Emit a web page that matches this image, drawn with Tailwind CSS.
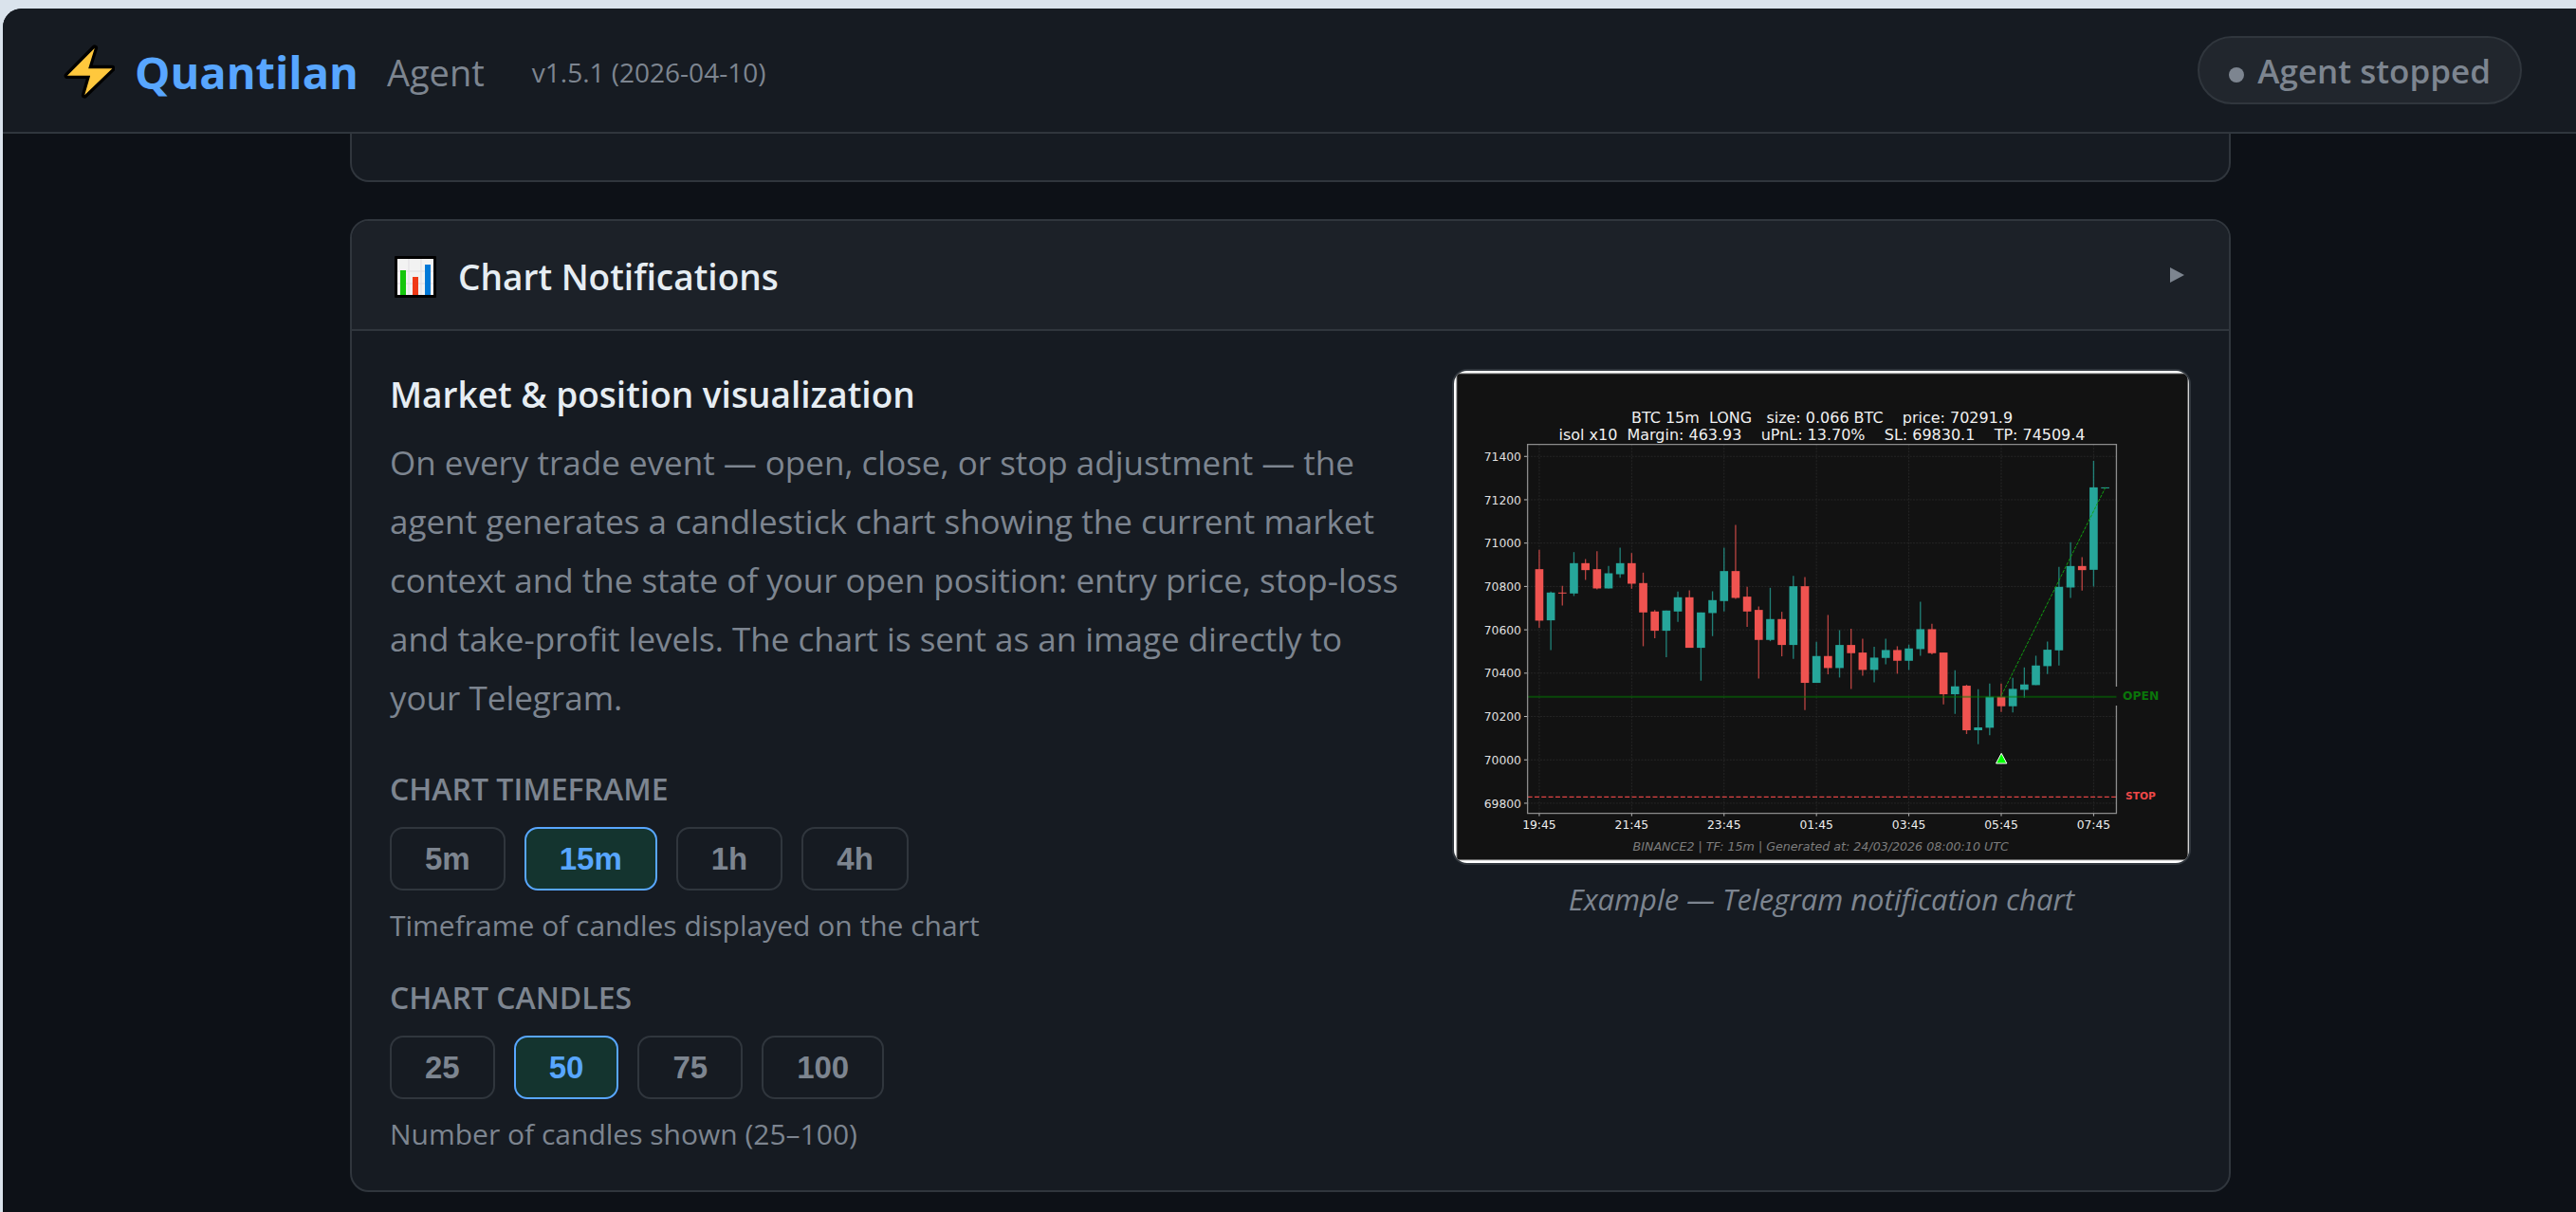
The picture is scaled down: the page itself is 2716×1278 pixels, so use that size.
<!DOCTYPE html>
<html lang="en" class="bg-[#dae3ec]">
<head>
    <meta charset="UTF-8">
    <title>Quantilan Agent</title>
    <!-- Tailwind CSS -->
    <script src="https://cdn.jsdelivr.net/npm/@tailwindcss/browser@4"></script>
</head>
<body class="flex min-h-screen flex-col bg-[#dae3ec] pt-[9px] pl-[3px] font-['Open_Sans',sans-serif] text-[#e6edf3]">

<div class="flex-1 overflow-hidden rounded-tl-[20px] bg-[#0d1117]">

    <header class="flex h-[132px] items-center justify-between border-b-2 border-[#30363d] bg-[#161b22] pr-[57px] pl-[64px]">
        <!-- Logo -->
        <div class="flex items-center pt-1">
            <svg class="mr-[21px] w-[54px]" viewBox="83 84 163 174" aria-hidden="true">
                <path d="M182 95 95 183H168L150 245 238 160H162Z" fill="#ffc83d" stroke="#000" stroke-width="20" stroke-linejoin="round"/>
                <path d="M182 95 95 183H168L150 245 238 160H162Z" fill="#ffc83d"/>
            </svg>
            <span class="mr-[30px] text-[47px] font-bold text-[#58a6ff]">Quantilan</span>
            <span class="mr-[50px] text-[38px] text-[#7d8590]">Agent</span>
            <span class="text-[28px] text-[#7d8590]">v1.5.1 (2026-04-10)</span>
        </div>

        <!-- Agent status -->
        <div class="flex h-[72px] items-center gap-[14px] rounded-full border-2 border-[#30363d] bg-[#21262d] px-[31px] pt-0.5 text-[35px] font-semibold text-[#7d8590]">
            <span class="mt-2 size-4 rounded-full bg-[#7d8590]"></span>
            Agent stopped
        </div>
    </header>

    <main class="mx-auto max-w-[1985px] pl-0.5">
        <section class="mb-[39px] h-[51px] rounded-b-[20px] border-2 border-t-0 border-[#30363d] bg-[#161b22]"></section>

        <!-- Chart notifications card -->
        <section class="overflow-hidden rounded-[20px] border-2 border-[#30363d] bg-[#161b22]">
            <button type="button" class="flex h-[116px] w-full items-center justify-between border-b-2 border-[#30363d] bg-[#1c2128] pr-[47px] pl-[45px] text-left">
                <span class="flex items-center gap-[23px] pt-1 text-[37px] font-semibold">
                    <svg class="size-[44px]" viewBox="0 0 44 44" aria-hidden="true">
                        <rect width="44" height="44" rx="1" fill="#000"/>
                        <rect x="3" y="3" width="38" height="38" fill="#f2f2f2"/>
                        <path d="M15 3V41M28 3V41M3 16H41M3 29H41" stroke="#e0dde2"/>
                        <rect x="6" y="15" width="6" height="26" fill="#16c60c"/>
                        <rect x="19" y="22" width="6" height="19" fill="#f03a17"/>
                        <rect x="32" y="9" width="6" height="32" fill="#0078d7"/>
                    </svg>
                    Chart Notifications
                </span>
                <svg class="h-4 w-[15px]" viewBox="0 0 15 16" aria-hidden="true"><path d="M0 0 15 8 0 16Z" fill="#7d8590"/></svg>
            </button>

            <div class="grid grid-cols-[11fr_8fr] gap-12 px-10 pt-10 pb-[38px]">
                <div>
                    <h2 class="text-[37px] leading-[54px] font-semibold">Market &amp; position visualization</h2>
                    <p class="mt-[14px] mb-10 text-[35px] leading-[62px] text-[#7d8590]">On every trade event — open, close, or stop adjustment — the agent generates a candlestick chart showing the current market context and the state of your open position: entry price, stop-loss and take-profit levels. The chart is sent as an image directly to your Telegram.</p>

                    <div role="group" aria-labelledby="timeframe" class="mb-[30px]">
                        <h3 id="timeframe" class="mb-[15px] text-[32px] leading-[50px] font-semibold text-[#7d8590]">CHART TIMEFRAME</h3>
                        <div class="flex gap-5 font-['Liberation_Sans',sans-serif] text-[33px] leading-[39px] font-bold text-[#7d8590]">
                            <button type="button" class="rounded-[14px] border-2 border-[#30363d] px-[35px] py-3">5m</button>
                            <button type="button" aria-pressed="true" class="rounded-[14px] border-2 border-[#58a6ff] bg-[#14342f] px-[35px] py-3 text-[#58a6ff]">15m</button>
                            <button type="button" class="rounded-[14px] border-2 border-[#30363d] px-[35px] py-3">1h</button>
                            <button type="button" class="rounded-[14px] border-2 border-[#30363d] px-[35px] py-3">4h</button>
                        </div>
                        <p class="mt-4 text-[30px] leading-[42px] text-[#7d8590]">Timeframe of candles displayed on the chart</p>
                    </div>

                    <div role="group" aria-labelledby="candles">
                        <h3 id="candles" class="mb-[15px] text-[32px] leading-[50px] font-semibold text-[#7d8590]">CHART CANDLES</h3>
                        <div class="flex gap-5 font-['Liberation_Sans',sans-serif] text-[33px] leading-[39px] font-bold text-[#7d8590]">
                            <button type="button" class="rounded-[14px] border-2 border-[#30363d] px-[35px] py-3">25</button>
                            <button type="button" aria-pressed="true" class="rounded-[14px] border-2 border-[#58a6ff] bg-[#14342f] px-[35px] py-3 text-[#58a6ff]">50</button>
                            <button type="button" class="rounded-[14px] border-2 border-[#30363d] px-[35px] py-3">75</button>
                            <button type="button" class="rounded-[14px] border-2 border-[#30363d] px-[35px] py-3">100</button>
                        </div>
                        <p class="mt-4 text-[30px] leading-[42px] text-[#7d8590]">Number of candles shown (25–100)</p>
                    </div>
                </div>

                <figure>
                    <div class="overflow-hidden rounded-[16px] border-2 border-[#30363d] bg-white">
                        <svg class="block w-full font-['DejaVu_Sans',sans-serif]" viewBox="36 30 2328 1557" role="img" aria-label="BTC 15m candlestick chart">
                            <rect x="43" y="37" width="2318" height="1543" fill="#8a8a8a"/>
                            <rect x="46" y="40" width="2312" height="1537" fill="#121212"/>
                            <g class="text-[48px]" fill="#f0f0f0" text-anchor="middle">
                                <text x="1201" y="194" class="whitespace-pre">BTC 15m  LONG   size: 0.066 BTC    price: 70291.9</text>
                                <text x="1201" y="249" class="whitespace-pre">isol x10  Margin: 463.93    uPnL: 13.70%    SL: 69830.1    TP: 74509.4</text>
                            </g>
                            <g id="axes"></g>
                            <g id="candlesticks"></g>
                            <!-- Entry, stop and running trade lines -->
                            <path d="M269 1062H2133" stroke="#008000" stroke-width="6" stroke-opacity="0.5"/>
                            <path d="M269 1379H2133" stroke="#e04545" stroke-width="4" stroke-dasharray="15 7"/>
                            <path d="M1769 1058 2098 400" stroke="#10a010" stroke-width="3" stroke-dasharray="10 4"/>
                            <path d="M1769 1241 1786 1273H1752Z" fill="#00ff00" stroke="#fff" stroke-width="3"/>
                            <path d="M2133 1030V263H269V1431H2133V1090" fill="none" stroke="#8c8c8c" stroke-width="4"/>
                            <g class="font-bold">
                                <text x="2153" y="1073" class="text-[37px]" fill="#0a750a">OPEN</text>
                                <text x="2162" y="1388" class="text-[32px]" fill="#ef4848">STOP</text>
                            </g>
                            <text x="1197" y="1548" class="text-[38px] italic" fill="#7d7d7d" text-anchor="middle">BINANCE2 | TF: 15m | Generated at: 24/03/2026 08:00:10 UTC</text>
                        </svg>
                    </div>
                    <figcaption class="mt-[15px] text-center text-[31px] leading-[42px] text-[#7d8590] italic">Example — Telegram notification chart</figcaption>
                </figure>
            </div>
        </section>
    </main>
</div>

<script>
    // Candle positions in chart units: [high, body top, body bottom, low, rising]
    const candles = [
        [597, 658, 821, 844, 0], [729, 732, 820, 914, 1], [711, 732, 735, 773, 0], [604, 639, 735, 743, 1],
        [626, 639, 661, 692, 0], [601, 658, 719, 722, 0], [648, 671, 719, 719, 1], [590, 639, 674, 685, 1],
        [607, 639, 704, 720, 0], [669, 702, 795, 902, 0], [787, 792, 853, 877, 0], [789, 789, 853, 937, 1],
        [729, 747, 792, 825, 1], [725, 747, 907, 907, 0], [795, 795, 907, 1011, 1], [728, 756, 797, 870, 1],
        [590, 664, 759, 792, 1], [518, 664, 749, 752, 0], [714, 745, 792, 841, 0], [776, 787, 882, 1004, 0],
        [717, 816, 882, 886, 1], [793, 816, 898, 934, 0], [679, 712, 898, 942, 1], [683, 712, 1018, 1104, 0],
        [888, 933, 1018, 1018, 1], [803, 933, 971, 991, 0], [851, 898, 971, 1001, 1], [847, 898, 924, 1037, 0],
        [878, 922, 977, 995, 0], [904, 938, 977, 1016, 1], [878, 914, 939, 959, 1], [902, 914, 948, 989, 0],
        [897, 909, 948, 977, 1], [761, 848, 911, 932, 1], [831, 848, 924, 928, 0], [922, 922, 1054, 1086, 0],
        [978, 1029, 1054, 1116, 1], [1024, 1027, 1168, 1180, 0], [1038, 1159, 1168, 1212, 1], [1020, 1062, 1160, 1184, 1],
        [1020, 1062, 1092, 1110, 0], [1002, 1037, 1092, 1112, 1], [969, 1023, 1040, 1065, 1], [932, 963, 1025, 1025, 1],
        [887, 913, 965, 990, 1], [651, 714, 915, 963, 1], [573, 648, 716, 749, 1], [620, 648, 661, 726, 0],
        [315, 399, 660, 713, 1], [399, 399, 402, 402, 1]
    ];
    const times = ['19:45', '21:45', '23:45', '01:45', '03:45', '05:45', '07:45'];
    const candleX = i => 306 + i * 36.56;

    // Grid lines, ticks and axis labels
    let axes = '';
    for (let i = 0; i < 9; i++) {
        const y = 301 + i * 137.25;
        axes += `<path d="M269 ${y}H2133" stroke="#262626" stroke-width="3" stroke-dasharray="6 4"/>
            <path d="M258 ${y}H269" stroke="#bbb" stroke-width="3"/>
            <text x="249" y="${y + 14}" class="text-[37px]" fill="#e0e0e0" text-anchor="end">${71400 - i * 200}</text>`;
    }
    times.forEach((time, i) => {
        const x = candleX(i * 8);
        axes += `<path d="M${x} 263V1431" stroke="#262626" stroke-width="3" stroke-dasharray="6 4"/>
            <path d="M${x} 1431V1440" stroke="#bbb" stroke-width="3"/>
            <text x="${x}" y="1481" class="text-[37px]" fill="#f0f0f0" text-anchor="middle">${time}</text>`;
    });
    document.getElementById('axes').innerHTML = axes;

    // Wicks and bodies
    document.getElementById('candlesticks').innerHTML = candles.map(([high, top, bottom, low, rising], i) => {
        const x = candleX(i);
        const color = rising ? '#26a69a' : '#ef5350';
        return `<path d="M${x} ${high}V${low}" stroke="${color}" stroke-width="4" stroke-opacity="0.75"/>
            <rect x="${x - 13}" y="${top}" width="26" height="${bottom - top}" fill="${color}"/>`;
    }).join('');
</script>

</body>
</html>
